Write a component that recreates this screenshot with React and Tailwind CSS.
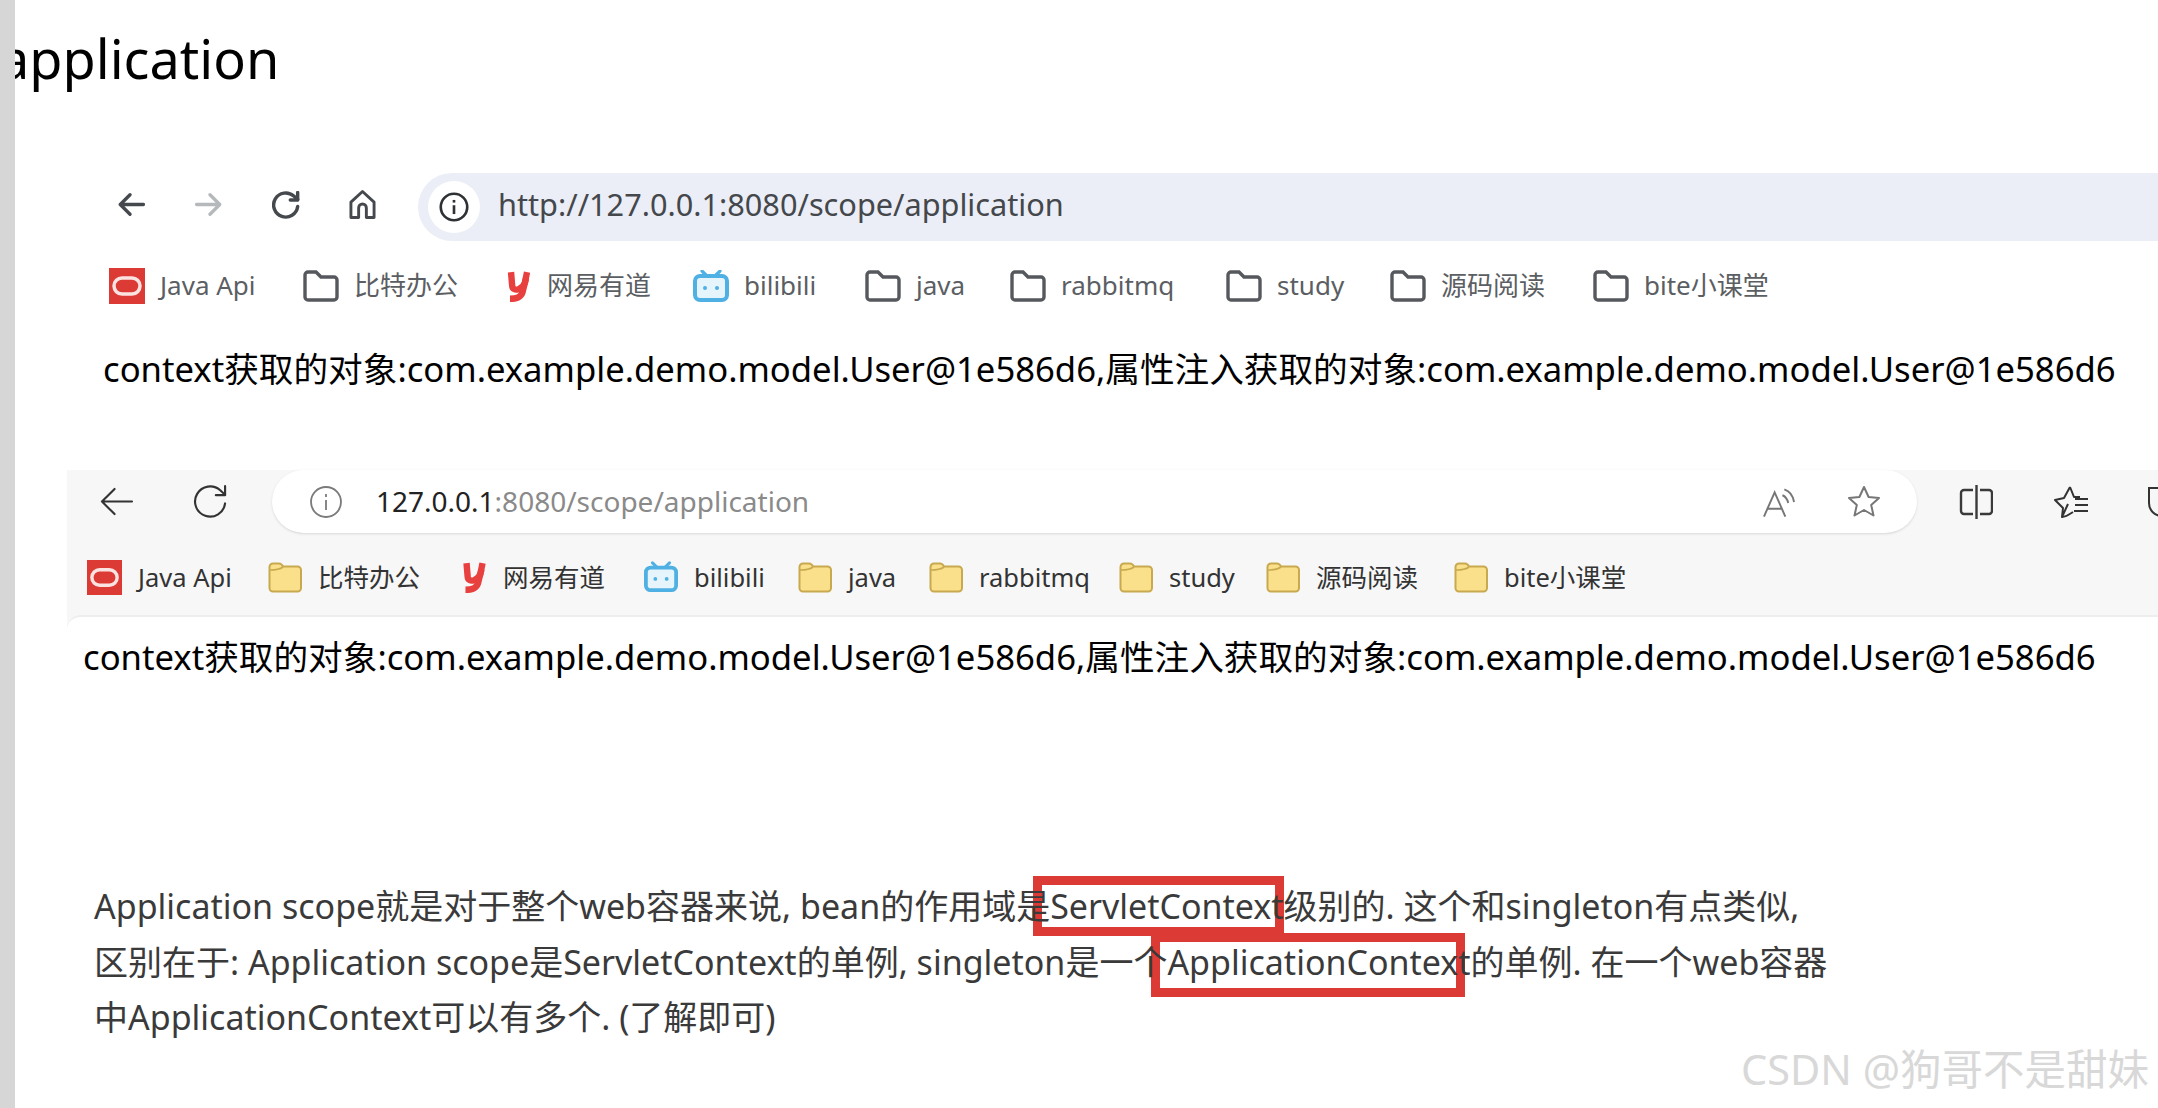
import React from "react";

const OracleIcon = ({ className }) => (
  <svg viewBox="0 0 36 36" className={className}>
    <rect width="36" height="36" fill="#dc3a34" />
    <rect x="5" y="10" width="26" height="16" rx="8" fill="none" stroke="#fbe3e1" strokeWidth="3.5" />
  </svg>
);

const YoudaoIcon = ({ className }) => (
  <svg viewBox="0 0 24 30" fill="none" stroke="#e8403f" strokeWidth="6" className={className}>
    <path d="M5 2l1 12c0 4 3 5 6 4 3-1 5-3 6-6l2-10" />
    <path d="M19 8l-3 12c-1 5-5 7-12 7" />
  </svg>
);

const BiliIcon = ({ className }) => (
  <svg viewBox="0 0 36 32" className={className}>
    <path d="M9 1l5 5M27 1l-5 5" stroke="#4fb0e3" strokeWidth="3.2" strokeLinecap="round" />
    <rect x="2" y="6" width="32" height="24" rx="5" fill="#e6f4fb" stroke="#4fb0e3" strokeWidth="4" />
    <circle cx="12" cy="18" r="2" fill="#4fb0e3" />
    <circle cx="24" cy="18" r="2" fill="#4fb0e3" />
  </svg>
);

const OutlineFolder = ({ className }) => (
  <svg viewBox="0 0 36 32" className={className}>
    <path d="M2 5a3 3 0 0 1 3-3h8l5 5h13a3 3 0 0 1 3 3v17a3 3 0 0 1-3 3H5a3 3 0 0 1-3-3z" fill="none" stroke="#55585c" strokeWidth="3.4" />
  </svg>
);

const YellowFolder = ({ className }) => (
  <svg viewBox="0 0 34 31" className={className}>
    <path d="M1.5 5a3.5 3.5 0 0 1 3.5-3.5h6c2 0 3 1 4 3h14.5a3.5 3.5 0 0 1 3.5 3.5v18a3.5 3.5 0 0 1-3.5 3.5H5A3.5 3.5 0 0 1 1.5 26z" fill="#fae08a" stroke="#c8a94f" strokeWidth="2" />
    <path d="M2 8c4 0 9 0 13-3" fill="none" stroke="#c8a94f" strokeWidth="1.6" />
  </svg>
);

const Back = ({ className, color, width }) => (
  <svg viewBox="0 0 36 32" fill="none" stroke={color} strokeWidth={width} strokeLinecap="round" strokeLinejoin="round" className={className}>
    <path d="M34 16H3M16 3L3 16l13 13" />
  </svg>
);

const Forward = ({ className, color, width }) => (
  <svg viewBox="0 0 36 32" fill="none" stroke={color} strokeWidth={width} strokeLinecap="round" strokeLinejoin="round" className={className}>
    <path d="M2 16h31M20 3l13 13-13 13" />
  </svg>
);

const Refresh = ({ className, color, width }) => (
  <svg viewBox="0 0 36 36" fill="none" stroke={color} strokeWidth={width} strokeLinecap="round" strokeLinejoin="round" className={className}>
    <path d="M33 20a15.5 15.5 0 1 1-5-13.5L33 11" />
    <path d="M33 2v9.500h-9.500" />
  </svg>
);

const HomeIcon = ({ className }) => (
  <svg viewBox="0 0 28 31" fill="none" stroke="#45494d" strokeWidth="3" strokeLinejoin="round" className={className}>
    <path d="M14 2L2 13v16h8V19a4 4 0 0 1 8 0v10h8V13z" />
  </svg>
);

const InfoIcon = ({ className, color, width }) => (
  <svg viewBox="0 0 34 34" fill="none" stroke={color} strokeWidth={width} className={className}>
    <circle cx="17" cy="17" r="15" />
    <path d="M17 15v10" />
    <path d="M17 9v3" />
  </svg>
);

const ReadAloud = ({ className }) => (
  <svg viewBox="0 0 34 30" fill="none" stroke="#767676" strokeWidth="2" className={className}>
    <path d="M1 30L12 5l11 25M5 22h14" />
    <path d="M20 8c3 1 5 4 6 8M22 2c6 2 9 7 10 13" />
  </svg>
);

const StarIcon = ({ className }) => (
  <svg viewBox="0 0 34 33" fill="none" stroke="#767676" strokeWidth="2" strokeLinejoin="round" className={className}>
    <path d="M17 2l4.600 10 10.400 1-7.800 7 2.300 10.500L17 25l-9.500 5.500L9.800 20 2 13l10.400-1z" />
  </svg>
);

const SplitIcon = ({ className }) => (
  <svg viewBox="0 0 34 34" fill="none" stroke="#3a3a3a" strokeWidth="2.4" className={className}>
    <path d="M14 5H5a3 3 0 0 0-3 3v18a3 3 0 0 0 3 3h9" />
    <path d="M21 5h9a3 3 0 0 1 3 3v18a3 3 0 0 1-3 3h-9" />
    <path d="M17.500 0v34" />
  </svg>
);

const FavList = ({ className }) => (
  <svg viewBox="0 0 36 33" fill="none" stroke="#333" strokeWidth="2" strokeLinejoin="round" className={className}>
    <path d="M17 2l4 10h6M15 19l-6 13 1-9-8-8 9-2 6-11" />
    <path d="M22 14h13M22 20h13M21 26h14" />
    <path d="M9 32c3 0 8-3 11-5" />
  </svg>
);

const chromeBookmarks = [
  { w: "w-[194px]", icon: <OracleIcon className="w-[36px] h-[36px]" />, text: "Java Api" },
  { w: "w-[202px]", icon: <OutlineFolder className="w-[36px] h-[32px]" />, text: "比特办公" },
  { w: "w-[188px]", icon: <YoudaoIcon className="w-[27px] h-[32px]" />, text: "网易有道" },
  { w: "w-[172px]", icon: <BiliIcon className="w-[36px] h-[32px]" />, text: "bilibili" },
  { w: "w-[145px]", icon: <OutlineFolder className="w-[36px] h-[32px]" />, text: "java" },
  { w: "w-[216px]", icon: <OutlineFolder className="w-[36px] h-[32px]" />, text: "rabbitmq" },
  { w: "w-[164px]", icon: <OutlineFolder className="w-[36px] h-[32px]" />, text: "study" },
  { w: "w-[203px]", icon: <OutlineFolder className="w-[36px] h-[32px]" />, text: "源码阅读" },
  { w: "w-[190px]", icon: <OutlineFolder className="w-[36px] h-[32px]" />, text: "bite小课堂" },
];

const edgeBookmarks = [
  { w: "w-[181px]", icon: <OracleIcon className="w-[35px] h-[35px]" />, text: "Java Api" },
  { w: "w-[193px]", icon: <YellowFolder className="w-[34px] h-[31px]" />, text: "比特办公" },
  { w: "w-[183px]", icon: <YoudaoIcon className="w-[26px] h-[32px]" />, text: "网易有道" },
  { w: "w-[154px]", icon: <BiliIcon className="w-[34px] h-[32px]" />, text: "bilibili" },
  { w: "w-[131px]", icon: <YellowFolder className="w-[34px] h-[31px]" />, text: "java" },
  { w: "w-[190px]", icon: <YellowFolder className="w-[34px] h-[31px]" />, text: "rabbitmq" },
  { w: "w-[147px]", icon: <YellowFolder className="w-[34px] h-[31px]" />, text: "study" },
  { w: "w-[188px]", icon: <YellowFolder className="w-[34px] h-[31px]" />, text: "源码阅读" },
  { w: "w-[180px]", icon: <YellowFolder className="w-[34px] h-[31px]" />, text: "bite小课堂" },
];

const resultText = "context获取的对象:com.example.demo.model.User@1e586d6,属性注入获取的对象:com.example.demo.model.User@1e586d6";

const App = () => {
  return (
    <div className="relative flex w-[2158px] h-[1108px] overflow-hidden bg-white font-['Noto_Sans','Noto_Sans_CJK_SC',sans-serif]">
      <div className="w-[15px] shrink-0 bg-[#d6d6d6]" />

      <div className="flex-1 min-w-0 flex flex-col">
        <div className="h-[173px] overflow-hidden">
          <h1 className="ml-[-16px] mt-[23px] text-[54px] leading-[70px] font-normal text-black">application</h1>
        </div>

        {/* chrome */}
        <div className="h-[68px] flex items-center pl-[103px]">
          <Back className="w-[27px] h-[25px] mb-[5px] shrink-0" color="#45494d" width="4.400" />
          <Forward className="ml-[50px] w-[27px] h-[25px] mb-[5px] shrink-0" color="#b6b9bc" width="4.400" />
          <Refresh className="ml-[50px] w-[28px] h-[28px] mb-[5px] shrink-0" color="#45494d" width="4.400" />
          <HomeIcon className="ml-[49px] w-[27px] h-[31px] mb-[5px] shrink-0" />
          <div className="ml-[42px] flex-1 h-[68px] rounded-l-[34px] bg-[#ebeef6] flex items-center pl-[10px]">
            <div className="w-[52px] h-[52px] rounded-full bg-white flex items-center justify-center">
              <InfoIcon className="w-[30px] h-[30px]" color="#2f3235" width="3" />
            </div>
            <span className="ml-[18px] pb-[5px] text-[30.7px] text-[#44474b]">http://127.0.0.1:8080/scope/application</span>
          </div>
        </div>
        <div className="h-[89px] flex items-center pl-[94px]">
          {chromeBookmarks.map((b) => (
            <div key={b.text} className={`${b.w} shrink-0 flex items-center gap-[15px]`}>
              {b.icon}
              <span className="text-[26px] text-[#5b5e62] whitespace-nowrap">{b.text}</span>
            </div>
          ))}
        </div>
        <div className="h-[80px] flex items-center pl-[88px] pb-[2px]">
          <span className="text-[34.65px] text-black whitespace-nowrap">{resultText}</span>
        </div>

        {/* edge */}
        <div className="mt-[60px] ml-[52px] h-[229px] flex flex-col bg-[#f7f7f7]">
          <div className="h-[63px] shrink-0 flex items-center">
            <Back className="ml-[32px] w-[35px] h-[31px] shrink-0" color="#333333" width="2.200" />
            <Refresh className="ml-[59px] w-[35px] h-[35px] shrink-0" color="#333333" width="2.200" />
            <div className="ml-[44px] w-[1645px] h-[63px] shrink-0 rounded-[32px] bg-white shadow-sm flex items-center pl-[37px] pr-[36px]">
              <InfoIcon className="w-[34px] h-[34px]" color="#7a7a7a" width="1.800" />
              <span className="ml-[33px] pb-[1px] text-[28px] text-[#222]">127.0.0.1<span className="text-[#8a8a8a]">:8080/scope/application</span></span>
              <ReadAloud className="ml-auto w-[33px] h-[30px]" />
              <StarIcon className="ml-[51px] w-[34px] h-[33px]" />
            </div>
            <SplitIcon className="ml-[42px] w-[34px] h-[34px] shrink-0" />
            <FavList className="ml-[60px] w-[36px] h-[33px] shrink-0" />
            <div className="ml-[59px] w-[30px] h-[30px] rounded-b-[14px] border-2 border-[#333] shrink-0" />
          </div>
          <div className="flex-1 flex items-center pl-[20px] pt-[6px]">
            {edgeBookmarks.map((b) => (
              <div key={b.text} className={`${b.w} shrink-0 flex items-center gap-[16px]`}>
                {b.icon}
                <span className="text-[25.5px] text-[#333] whitespace-nowrap">{b.text}</span>
              </div>
            ))}
          </div>
          <div className="h-[84px] shrink-0 flex items-center pl-[16px] pb-[2px] bg-white rounded-tl-[14px] border-t-2 border-[#eeeeee]">
            <span className="text-[34.65px] text-black whitespace-nowrap">{resultText}</span>
          </div>
        </div>

        {/* explanation */}
        <div className="relative mt-[180px] ml-[79px] text-[34px] leading-[55.5px] text-[#3a3a3a]">
          <div className="absolute left-[939px] top-[-3px] w-[251px] h-[60px] border-[9px] border-[#dc3a34]" />
          <div className="absolute left-[1057px] top-[54px] w-[314px] h-[64px] border-[9px] border-[#dc3a34]" />
          <p className="relative whitespace-nowrap">Application scope就是对于整个web容器来说, bean的作用域是ServletContext级别的. 这个和singleton有点类似,</p>
          <p className="relative whitespace-nowrap">区别在于: Application scope是ServletContext的单例, singleton是一个ApplicationContext的单例. 在一个web容器</p>
          <p className="relative whitespace-nowrap">中ApplicationContext可以有多个. (了解即可)</p>
        </div>
      </div>

      <div className="absolute left-[1741px] top-[1044px] text-[41.500px] leading-[50px] text-[#d8d8d8] whitespace-nowrap">CSDN @狗哥不是甜妹</div>
    </div>
  );
};

export default App;
